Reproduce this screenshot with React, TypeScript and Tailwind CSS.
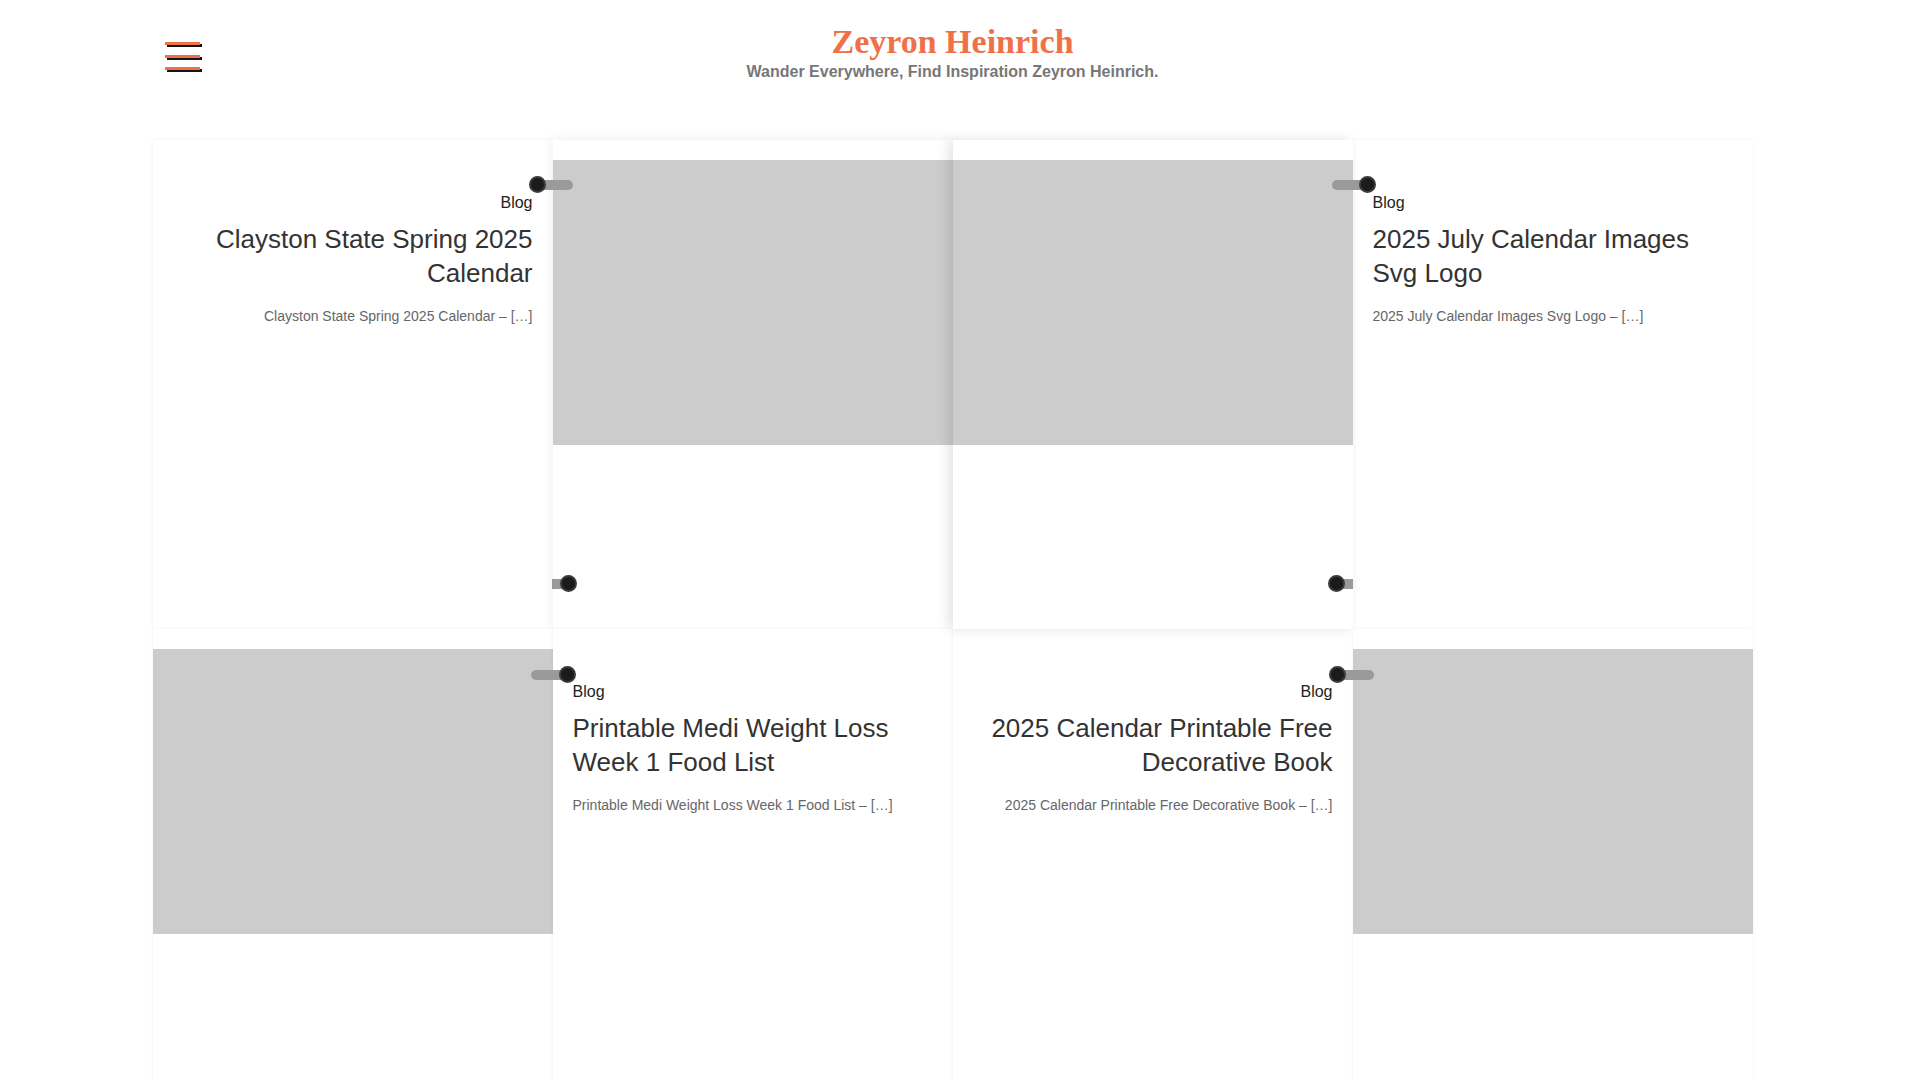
const posts = [
  { title: "Clayston State Spring 2025 Calendar", align: "right" },
  { title: "2025 July Calendar Images Svg Logo", align: "left" },
  { title: "Printable Medi Weight Loss Week 1 Food List", align: "left" },
  { title: "2025 Calendar Printable Free Decorative Book", align: "right" },
];

const TextCell = ({ title, align, className = "" }: { title: string; align: string; className?: string }) => {
  const right = align === "right";
  return (
    <div className={`bg-white px-[20px] pt-[51px] ${right ? "text-right" : "text-left"} ${className}`}>
      <a className="block text-[16px] leading-[24px] text-[#222]">Blog</a>
      <h2 className="mt-[7px] text-[26px] leading-[34px] text-[#333]">{title}</h2>
      <p className="mt-[15px] text-[14px] leading-[22px] text-[#666]">{title} – […]</p>
    </div>
  );
};

const ImageCell = ({ className = "" }: { className?: string }) => (
  <div className={`bg-white pt-[20px] ${className}`}>
    <div className="h-[285px] w-full bg-[#cccccc]" />
  </div>
);

const dot = "absolute top-0 h-[17px] w-[17px] rounded-full bg-[#1b1b1b] border-[2px] border-[#3a3a3a]";
const bar = "absolute top-[3.5px] h-[10px] bg-[#9a9a9a]";

export default function App() {
  return (
    <div className="h-screen overflow-hidden bg-white pr-[15px] font-['Liberation_Sans',Arial,sans-serif]">
      <header className="mx-auto grid w-[1600px] grid-cols-[1fr_auto_1fr] items-start pt-[21px]">
        <button className="mt-[21px] ml-[12px] flex w-[40px] flex-col gap-[9.5px]" aria-label="menu">
          <span className="block h-[3px] w-[35px] bg-[#f07048] shadow-[2px_2px_0_#151515]" />
          <span className="block h-[3px] w-[35px] bg-[#f07048] shadow-[2px_2px_0_#151515]" />
          <span className="block h-[3px] w-[35px] bg-[#f07048] shadow-[2px_2px_0_#151515]" />
        </button>
        <div className="text-center">
          <h1 className="font-['Liberation_Serif',serif] text-[34px] font-bold leading-[41px] text-[#f07048]">
            Zeyron Heinrich
          </h1>
          <p className="text-[16px] font-bold leading-[20px] text-[#777]">
            Wander Everywhere, Find Inspiration Zeyron Heinrich.
          </p>
        </div>
        <div />
      </header>

      <main className="relative mx-auto mt-[58px] w-[1600px]">
        <div className="grid grid-cols-4 auto-rows-[489px]">
          <TextCell {...posts[0]} className="shadow-[0_0_3px_rgba(0,0,0,0.08)]" />
          <ImageCell className="shadow-[0_0_12px_rgba(0,0,0,0.08)]" />
          <ImageCell className="relative shadow-[-4px_0_12px_rgba(0,0,0,0.12)]" />
          <TextCell {...posts[1]} className="shadow-[0_0_3px_rgba(0,0,0,0.06)]" />

          <ImageCell className="shadow-[0_0_3px_rgba(0,0,0,0.06)]" />
          <TextCell {...posts[2]} className="shadow-[0_0_3px_rgba(0,0,0,0.08)]" />
          <TextCell {...posts[3]} className="shadow-[0_0_3px_rgba(0,0,0,0.08)]" />
          <ImageCell className="shadow-[0_0_3px_rgba(0,0,0,0.06)]" />
        </div>

        {/* pins over the card seams */}
        <div className="absolute left-[376px] top-[36px] h-[17px] w-[44px]">
          <span className={`${bar} left-[4px] w-[40px] rounded-full`} />
          <span className={`${dot} left-0`} />
        </div>
        <div className="absolute left-[1179px] top-[36px] h-[17px] w-[44px]">
          <span className={`${bar} left-0 w-[40px] rounded-full`} />
          <span className={`${dot} left-[27px]`} />
        </div>
        <div className="absolute left-[399px] top-[435px] h-[17px] w-[25px]">
          <span className={`${bar} left-0 w-[18px] rounded-r-full`} />
          <span className={`${dot} left-[8px]`} />
        </div>
        <div className="absolute left-[1175px] top-[435px] h-[17px] w-[25px]">
          <span className={`${bar} left-[4px] w-[21px] rounded-l-full`} />
          <span className={`${dot} left-0`} />
        </div>
        <div className="absolute left-[378px] top-[526px] h-[17px] w-[45px]">
          <span className={`${bar} left-0 w-[36px] rounded-full`} />
          <span className={`${dot} left-[28px]`} />
        </div>
        <div className="absolute left-[1176px] top-[526px] h-[17px] w-[45px]">
          <span className={`${bar} left-[4px] w-[41px] rounded-full`} />
          <span className={`${dot} left-0`} />
        </div>
      </main>
    </div>
  );
}
